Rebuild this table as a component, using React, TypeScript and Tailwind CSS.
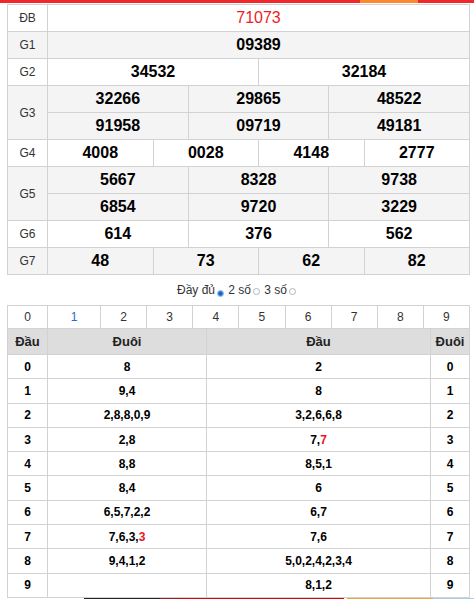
import type { ReactNode } from "react"

type Prize = { label: string, rows: string[][], gray: boolean, red?: boolean }

const prizes: Prize[] = [
  { label: "ĐB", rows: [["71073"]], gray: false, red: true },
  { label: "G1", rows: [["09389"]], gray: true },
  { label: "G2", rows: [["34532", "32184"]], gray: false },
  { label: "G3", rows: [["32266", "29865", "48522"], ["91958", "09719", "49181"]], gray: true },
  { label: "G4", rows: [["4008", "0028", "4148", "2777"]], gray: false },
  { label: "G5", rows: [["5667", "8328", "9738"], ["6854", "9720", "3229"]], gray: true },
  { label: "G6", rows: [["614", "376", "562"]], gray: false },
  { label: "G7", rows: [["48", "73", "62", "82"]], gray: true },
]

const gridCols: Record<number, string> = {
  1: "grid-cols-1",
  2: "grid-cols-2",
  3: "grid-cols-3",
  4: "grid-cols-4",
}

// dau / duoi lists; a trailing "!" marks the red digit
const loto: [string, string][] = [
  ["8", "2"],
  ["9,4", "8"],
  ["2,8,8,0,9", "3,2,6,6,8"],
  ["2,8", "7,7!"],
  ["8,8", "8,5,1"],
  ["8,4", "6"],
  ["6,5,7,2,2", "6,7"],
  ["7,6,3,3!", "7,6"],
  ["9,4,1,2", "5,0,2,4,2,3,4"],
  ["", "8,1,2"],
]

function Digits({ value }: { value: string }): ReactNode {
  if (!value.endsWith("!")) return value
  const body = value.slice(0, -1)
  const cut = body.lastIndexOf(",") + 1
  return (
    <>
      {body.slice(0, cut)}
      <span className="text-[#e8141e]">{body.slice(cut)}</span>
    </>
  )
}

function Radio({ on }: { on?: boolean }) {
  return on
    ? <span className="ml-[2px] mr-[1px] inline-flex align-[-1px] w-[7px] h-[7px] rounded-full bg-[#2f7ad6] border border-[#9cc3f0] items-center justify-center"><span className="w-[3px] h-[3px] rounded-full bg-[#1b5fc0]" /></span>
    : <span className="ml-[2px] mr-[1px] inline-block align-[-1px] w-[7px] h-[7px] rounded-full border border-[#b5b5b5] bg-white" />
}

export default function App() {
  return (
    <div className="w-[474px] h-[599px] overflow-hidden bg-white font-['Liberation_Sans',Arial,sans-serif] text-[#222]">
      <div className="h-[3px] flex">
        <div className="w-[360px] bg-[#f0282e]" />
        <div className="w-[58px] bg-[#fb8a2c]" />
        <div className="flex-1 bg-[#f0282e]" />
      </div>

      {/* prize table */}
      <div className="mt-[1px] ml-[7px] w-[463px] border-l border-t border-[#d2d2d2]">
        {prizes.map((p) => (
          <div key={p.label} className={`flex ${p.gray ? "bg-[#f4f4f4]" : "bg-white"}`}>
            <div className="w-[40px] shrink-0 border-r border-b border-[#d2d2d2] flex items-center justify-center text-[12px] text-[#333]">
              {p.label}
            </div>
            <div className="flex-1">
              {p.rows.map((row, i) => (
                <div key={i} className={`grid ${gridCols[row.length]}`}>
                  {row.map((n, j) => (
                    <div key={j} className={`h-[27px] border-r border-b border-[#d2d2d2] flex items-center justify-center ${p.red ? "text-[#ee1c25] text-[16px]" : "font-bold text-[16px] text-black"}`}>
                      {n}
                    </div>
                  ))}
                </div>
              ))}
            </div>
          </div>
        ))}
      </div>

      <div className="h-[30px] leading-[30px] text-center text-[12px] text-[#333]">
        <span>Đầy đủ<Radio on /> 2 số<Radio /> 3 số<Radio /></span>
      </div>

      {/* loto table */}
      <div className="ml-[7px] w-[463px] border-l border-t border-[#d2d2d2] text-[12px]">
        <div className="grid grid-cols-[40px_53px_repeat(8,1fr)] text-[#333]">
          {["0", "1", "2", "3", "4", "5", "6", "7", "8", "9"].map((d) => (
            <div key={d} className={`h-[23px] border-r border-b border-[#d2d2d2] flex items-center justify-center ${d === "1" ? "text-[#1f6fc4]" : ""}`}>
              {d}
            </div>
          ))}
        </div>
        <div className="grid grid-cols-[40px_159px_224px_1fr] bg-[#dddddd] font-bold text-[13px] text-[#222]">
          {["Đầu", "Đuôi", "Đầu", "Đuôi"].map((h, i) => (
            <div key={i} className="h-[26px] border-r border-b border-[#d2d2d2] flex items-center justify-center">{h}</div>
          ))}
        </div>
        {loto.map(([duoi, dau], i) => (
          <div key={i} className="grid grid-cols-[40px_159px_224px_1fr] font-bold text-black">
            <div className="h-[24.3px] border-r border-b border-[#d2d2d2] flex items-center justify-center">{i}</div>
            <div className="h-[24.3px] border-r border-b border-[#d2d2d2] flex items-center justify-center"><Digits value={duoi} /></div>
            <div className="h-[24.3px] border-r border-b border-[#d2d2d2] flex items-center justify-center"><Digits value={dau} /></div>
            <div className="h-[24.3px] border-r border-b border-[#d2d2d2] flex items-center justify-center">{i}</div>
          </div>
        ))}
      </div>

      <div className="ml-[84px] h-[20px] flex">
        <div className="w-[76px] bg-[#262626]" />
        <div className="w-[19px] bg-[#a31a24]" />
        <div className="w-[165px] bg-[#d8070e]" />
        <div className="w-[3px] bg-white" />
        <div className="w-[86px] bg-[#e7a83a]" />
        <div className="flex-1 bg-[#a9cfe4]" />
      </div>
    </div>
  )
}
